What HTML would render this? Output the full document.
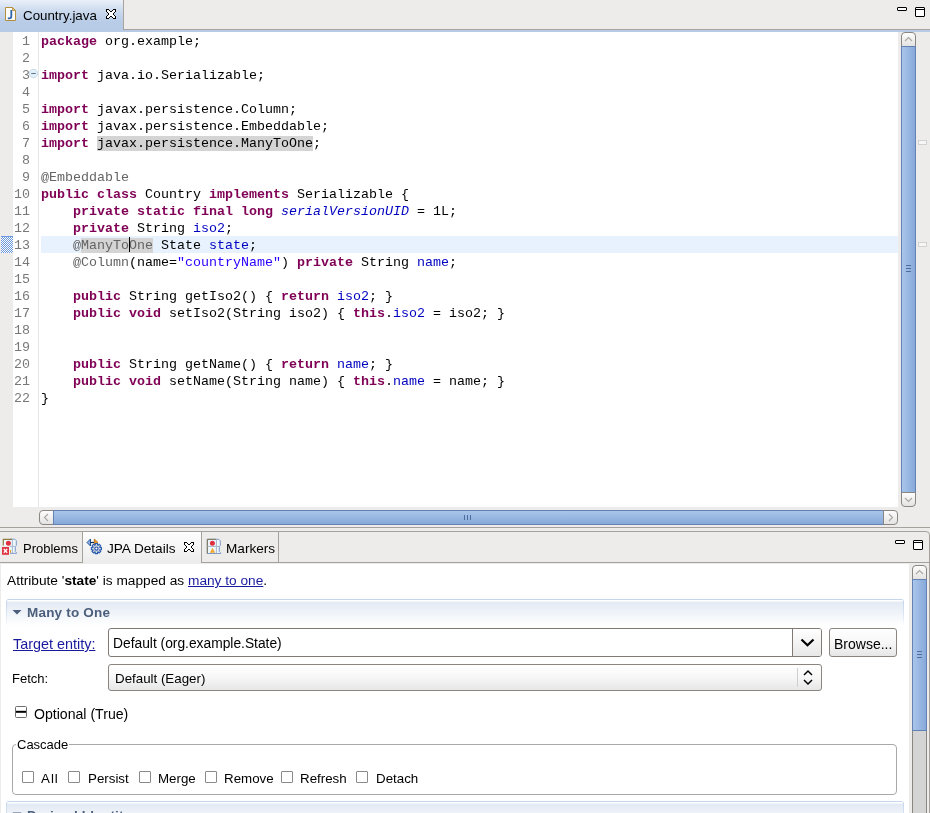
<!DOCTYPE html>
<html><head><meta charset="utf-8">
<style>
*{margin:0;padding:0;box-sizing:border-box}
html,body{width:930px;height:813px;overflow:hidden;background:#edeceb;font-family:"Liberation Sans",sans-serif;font-size:13.33px;color:#000}
.abs{position:absolute}
/* editor */
#tabstrip{left:0;top:0;width:930px;height:30px;background:#edeceb;border-bottom:1px solid #a8a39e}
#tab1{left:0;top:0;width:123px;height:32px;background:linear-gradient(#eaf0f9 0px,#c9d8ed 12px,#b8cce8 22px,#b7cbe7)}
#tab1sep{left:123px;top:0;width:1px;height:30px;background:#a8a39e}
#blueline{left:0;top:30px;width:930px;height:2px;background:#b7cbe7}
#editor{left:13px;top:32px;width:885px;height:475px;background:#fff}
#rulerline{left:38px;top:32px;width:1px;height:475px;background:#e6e6e6}
.code{font-family:"Liberation Mono",monospace;font-size:13.33px;line-height:17px;white-space:pre}
#lnums{left:14px;top:33px;width:16px;text-align:right;color:#787878}
#src{left:41px;top:33px;color:#000}
.k{color:#7f0055;font-weight:bold}
.a{color:#646464}
.f{color:#0000c0}
.fi{color:#0000c0;font-style:italic}
.s{color:#2a00ff}
.hl{background:#d4d4d4}
#curline{left:41px;top:236px;width:857px;height:17px;background:#e8f2fe}

.t{position:absolute;white-space:pre;font-family:"Liberation Sans",sans-serif;font-size:13.33px;line-height:16px}
#vsb{left:898px;top:32px;width:32px;height:475px;background:#edeceb}
.sbtn{position:absolute;border:1px solid #8a8681;background:linear-gradient(#fdfdfd,#e4e3e2)}
.vthumb{position:absolute;border:1px solid #6382b3;background:linear-gradient(90deg,#a9c5ea,#98b7e2 50%,#87a9d9)}
.hthumb{position:absolute;border:1px solid #6382b3;background:linear-gradient(#a9c5ea,#98b7e2 50%,#87a9d9)}
.grip{position:absolute;background:#4f6d9c}
.ovm{position:absolute;width:9px;height:5px;border:1px solid #d2d2d2;background:#f6f6f6}
.line{position:absolute;background:#a5a19c}

.cb{position:absolute;width:12px;height:12px;border:1px solid #8a8a8a;border-radius:1px;background:#fff}
.btn{position:absolute;border:1px solid #8a8580;border-radius:3px;background:linear-gradient(#fff 0%,#f7f7f7 50%,#e6e6e6 100%)}
body>*{will-change:transform}</style></head><body>
<div id="tabstrip" class="abs"></div>
<div id="tab1" class="abs"></div>
<div id="tab1sep" class="abs"></div>
<div id="blueline" class="abs"></div>
<div id="editor" class="abs"></div>
<div id="rulerline" class="abs"></div>
<div id="curline" class="abs"></div>
<div id="lnums" class="abs code">1
2
3
4
5
6
7
8
9
10
11
12
13
14
15
16
17
18
19
20
21
22</div>
<div id="src" class="abs code"><span class="k">package</span> org.example;

<span class="k">import</span> java.io.Serializable;

<span class="k">import</span> javax.persistence.Column;
<span class="k">import</span> javax.persistence.Embeddable;
<span class="k">import</span> <span class="hl">javax.persistence.ManyToOne</span>;

<span class="a">@Embeddable</span>
<span class="k">public</span> <span class="k">class</span> Country <span class="k">implements</span> Serializable {
    <span class="k">private</span> <span class="k">static</span> <span class="k">final</span> <span class="k">long</span> <span class="fi">serialVersionUID</span> = 1L;
    <span class="k">private</span> String <span class="f">iso2</span>;
    <span class="a">@<span class="hl">ManyToOne</span></span> State <span class="f">state</span>;
    <span class="a">@Column</span>(name=<span class="s">"countryName"</span>) <span class="k">private</span> String <span class="f">name</span>;

    <span class="k">public</span> String getIso2() { <span class="k">return</span> <span class="f">iso2</span>; }
    <span class="k">public</span> <span class="k">void</span> setIso2(String iso2) { <span class="k">this</span>.<span class="f">iso2</span> = iso2; }


    <span class="k">public</span> String getName() { <span class="k">return</span> <span class="f">name</span>; }
    <span class="k">public</span> <span class="k">void</span> setName(String name) { <span class="k">this</span>.<span class="f">name</span> = name; }
}</div>

<!-- J icon -->
<svg class="abs" style="left:4px;top:6px" width="14" height="16" viewBox="0 0 14 16">
<path d="M1.5 1.5 H8.5 L11.5 4.5 V14.5 H1.5 Z" fill="#fbfbf8" stroke="#b38c3c" stroke-width="1"/>
<path d="M8.5 1.5 V4.5 H11.5 Z" fill="#e8c878" stroke="#b38c3c" stroke-width="0.8"/>
<path d="M7.3 4 V10.3 Q7.3 12.3 5.3 12.3 H3.8" fill="none" stroke="#2f66ad" stroke-width="1.8"/>
</svg>
<div class="t" style="left:23px;top:8px">Country.java</div>
<svg class="abs" style="left:106px;top:9px" width="10" height="10" shape-rendering="crispEdges"><path d="M1 1h1v1h-1zM2 1h1v1h-1zM7 1h1v1h-1zM8 1h1v1h-1zM1 2h1v1h-1zM2 2h1v1h-1zM3 2h1v1h-1zM6 2h1v1h-1zM7 2h1v1h-1zM8 2h1v1h-1zM2 3h1v1h-1zM3 3h1v1h-1zM4 3h1v1h-1zM5 3h1v1h-1zM6 3h1v1h-1zM7 3h1v1h-1zM3 4h1v1h-1zM4 4h1v1h-1zM5 4h1v1h-1zM6 4h1v1h-1zM3 5h1v1h-1zM4 5h1v1h-1zM5 5h1v1h-1zM6 5h1v1h-1zM2 6h1v1h-1zM3 6h1v1h-1zM4 6h1v1h-1zM5 6h1v1h-1zM6 6h1v1h-1zM7 6h1v1h-1zM1 7h1v1h-1zM2 7h1v1h-1zM3 7h1v1h-1zM6 7h1v1h-1zM7 7h1v1h-1zM8 7h1v1h-1zM1 8h1v1h-1zM2 8h1v1h-1zM7 8h1v1h-1zM8 8h1v1h-1z" fill="#fff"/><path d="M0 0h1v1h-1zM1 0h1v1h-1zM2 0h1v1h-1zM7 0h1v1h-1zM8 0h1v1h-1zM9 0h1v1h-1zM0 1h1v1h-1zM3 1h1v1h-1zM6 1h1v1h-1zM9 1h1v1h-1zM0 2h1v1h-1zM4 2h1v1h-1zM5 2h1v1h-1zM9 2h1v1h-1zM1 3h1v1h-1zM8 3h1v1h-1zM2 4h1v1h-1zM7 4h1v1h-1zM2 5h1v1h-1zM7 5h1v1h-1zM1 6h1v1h-1zM8 6h1v1h-1zM0 7h1v1h-1zM4 7h1v1h-1zM5 7h1v1h-1zM9 7h1v1h-1zM0 8h1v1h-1zM3 8h1v1h-1zM6 8h1v1h-1zM9 8h1v1h-1zM0 9h1v1h-1zM1 9h1v1h-1zM2 9h1v1h-1zM7 9h1v1h-1zM8 9h1v1h-1zM9 9h1v1h-1z" fill="#000"/></svg>
<!-- min/max editor -->
<div class="abs" style="left:897px;top:7px;width:10px;height:4px;border:1px solid #000;border-radius:1px;background:#fff"></div>
<div class="abs" style="left:915px;top:7px;width:10px;height:10px;border:1px solid #000;border-radius:1px;background:#fff;box-shadow:inset 0 -6px 0 #fff, inset 0 -7px 0 #000"></div>
<!-- vertical scrollbar -->
<div id="vsb" class="abs"></div>
<div class="sbtn" style="left:901px;top:32px;width:15px;height:15px;border-radius:4px 4px 0 0"></div>
<svg class="abs" style="left:901px;top:32px" width="15" height="15"><path d="M4 9 L7.5 5.5 L11 9" fill="none" stroke="#aaa6a2" stroke-width="1.1"/></svg>
<div class="vthumb" style="left:901px;top:46px;width:15px;height:447px"></div>
<div class="grip" style="left:906px;top:265px;width:5px;height:1px"></div>
<div class="grip" style="left:906px;top:268px;width:5px;height:1px"></div>
<div class="grip" style="left:906px;top:271px;width:5px;height:1px"></div>
<div class="sbtn" style="left:901px;top:492px;width:15px;height:15px;border-radius:0 0 4px 4px"></div>
<svg class="abs" style="left:901px;top:492px" width="15" height="15"><path d="M4 6 L7.5 9.5 L11 6" fill="none" stroke="#aaa6a2" stroke-width="1.1"/></svg>
<div class="ovm" style="left:918px;top:140px"></div>
<div class="ovm" style="left:918px;top:242px"></div>
<!-- horizontal scrollbar -->
<div class="sbtn" style="left:39px;top:510px;width:15px;height:15px;border-radius:4px 0 0 4px"></div>
<svg class="abs" style="left:39px;top:510px" width="15" height="15"><path d="M9 4 L5.5 7.5 L9 11" fill="none" stroke="#aaa6a2" stroke-width="1.1"/></svg>
<div class="hthumb" style="left:53px;top:510px;width:831px;height:15px"></div>
<div class="grip" style="left:464px;top:515px;width:1px;height:5px"></div>
<div class="grip" style="left:467px;top:515px;width:1px;height:5px"></div>
<div class="grip" style="left:470px;top:515px;width:1px;height:5px"></div>
<div class="sbtn" style="left:883px;top:510px;width:15px;height:15px;border-radius:0 4px 4px 0"></div>
<svg class="abs" style="left:883px;top:510px" width="15" height="15"><path d="M6 4 L9.5 7.5 L6 11" fill="none" stroke="#aaa6a2" stroke-width="1.1"/></svg>
<div class="line" style="left:0;top:527px;width:930px;height:1px"></div>

<!-- bottom panel -->
<div class="abs" style="left:-5px;top:531px;width:935px;height:290px;border:1px solid #a5a19c;border-radius:0 4px 0 0"></div>
<div class="abs" style="left:82px;top:531px;width:120px;height:32px;background:linear-gradient(#fefefe,#ececec);border:1px solid #a5a19c;border-bottom:none"></div>
<div class="abs" style="left:83px;top:563px;width:118px;height:1px;background:#ededed"></div>
<div class="line" style="left:0;top:562px;width:82px;height:1px"></div>
<div class="line" style="left:201px;top:562px;width:728px;height:1px"></div>
<div class="line" style="left:278px;top:532px;width:1px;height:30px"></div>
<div class="abs" style="left:1px;top:564px;width:908px;height:249px;background:#fff"></div>
<div class="abs" style="left:909px;top:564px;width:20px;height:249px;background:#edeceb"></div>
<div class="abs" style="left:912px;top:580px;width:15px;height:233px;background:#d4d4d4;border-left:1px solid #8a8681;border-right:1px solid #8a8681"></div>
<div class="sbtn" style="left:912px;top:565px;width:15px;height:15px;border-radius:4px 4px 0 0"></div>
<svg class="abs" style="left:912px;top:565px" width="15" height="15"><path d="M4 9 L7.5 5.5 L11 9" fill="none" stroke="#aaa6a2" stroke-width="1.1"/></svg>
<div class="vthumb" style="left:912px;top:579px;width:15px;height:152px"></div>
<div class="grip" style="left:917px;top:651px;width:5px;height:1px"></div>
<div class="grip" style="left:917px;top:654px;width:5px;height:1px"></div>
<div class="grip" style="left:917px;top:657px;width:5px;height:1px"></div>
<!-- min/max panel -->
<div class="abs" style="left:895px;top:540px;width:10px;height:4px;border:1px solid #000;border-radius:1px;background:#fff"></div>
<div class="abs" style="left:913px;top:540px;width:10px;height:10px;border:1px solid #000;border-radius:1px;background:#fff;box-shadow:inset 0 -6px 0 #fff, inset 0 -7px 0 #000"></div>
<!-- tabs text -->
<div class="t" style="left:23px;top:541px;font-size:13px">Problems</div>
<div class="t" style="left:107px;top:541px;font-size:13.6px">JPA Details</div>
<div class="t" style="left:226px;top:541px;font-size:13.6px">Markers</div>
<svg class="abs" style="left:184px;top:542px" width="10" height="10" shape-rendering="crispEdges"><path d="M1 1h1v1h-1zM2 1h1v1h-1zM7 1h1v1h-1zM8 1h1v1h-1zM1 2h1v1h-1zM2 2h1v1h-1zM3 2h1v1h-1zM6 2h1v1h-1zM7 2h1v1h-1zM8 2h1v1h-1zM2 3h1v1h-1zM3 3h1v1h-1zM4 3h1v1h-1zM5 3h1v1h-1zM6 3h1v1h-1zM7 3h1v1h-1zM3 4h1v1h-1zM4 4h1v1h-1zM5 4h1v1h-1zM6 4h1v1h-1zM3 5h1v1h-1zM4 5h1v1h-1zM5 5h1v1h-1zM6 5h1v1h-1zM2 6h1v1h-1zM3 6h1v1h-1zM4 6h1v1h-1zM5 6h1v1h-1zM6 6h1v1h-1zM7 6h1v1h-1zM1 7h1v1h-1zM2 7h1v1h-1zM3 7h1v1h-1zM6 7h1v1h-1zM7 7h1v1h-1zM8 7h1v1h-1zM1 8h1v1h-1zM2 8h1v1h-1zM7 8h1v1h-1zM8 8h1v1h-1z" fill="#fff"/><path d="M0 0h1v1h-1zM1 0h1v1h-1zM2 0h1v1h-1zM7 0h1v1h-1zM8 0h1v1h-1zM9 0h1v1h-1zM0 1h1v1h-1zM3 1h1v1h-1zM6 1h1v1h-1zM9 1h1v1h-1zM0 2h1v1h-1zM4 2h1v1h-1zM5 2h1v1h-1zM9 2h1v1h-1zM1 3h1v1h-1zM8 3h1v1h-1zM2 4h1v1h-1zM7 4h1v1h-1zM2 5h1v1h-1zM7 5h1v1h-1zM1 6h1v1h-1zM8 6h1v1h-1zM0 7h1v1h-1zM4 7h1v1h-1zM5 7h1v1h-1zM9 7h1v1h-1zM0 8h1v1h-1zM3 8h1v1h-1zM6 8h1v1h-1zM9 8h1v1h-1zM0 9h1v1h-1zM1 9h1v1h-1zM2 9h1v1h-1zM7 9h1v1h-1zM8 9h1v1h-1zM9 9h1v1h-1z" fill="#000"/></svg>
<!-- content -->
<div class="t" style="left:7px;top:573px;font-size:13.7px">Attribute '<b>state</b>' is mapped as <span style="color:#1a1a9e;text-decoration:underline">many to one</span>.</div>
<div class="abs" style="left:6px;top:599px;width:898px;height:28px;border-top:1px solid #c5d6ec;border-radius:3px 3px 0 0;background:linear-gradient(#ffffff 0,#ffffff 1px,#e3eaf4 2px,#fff 26px)"></div>
<div class="abs" style="left:6px;top:601px;width:1px;height:25px;background:linear-gradient(#c5d6ec,rgba(197,214,236,0))"></div>
<div class="abs" style="left:903px;top:601px;width:1px;height:25px;background:linear-gradient(#c5d6ec,rgba(197,214,236,0))"></div>
<svg class="abs" style="left:12px;top:610px" width="10" height="5"><path d="M0.5 0 H9.5 L5 4.6 Z" fill="#4b5e7b"/></svg>
<div class="t" style="left:27px;top:605px;font-weight:bold;color:#4b5e7b;font-size:13.5px;letter-spacing:0.2px">Many to One</div>
<div class="t" style="left:13px;top:636px;color:#1a1a9e;text-decoration:underline;font-size:14.4px">Target entity:</div>
<div class="abs" style="left:108px;top:628px;width:714px;height:29px;border:1px solid #7f7a75;border-radius:3px;background:#fff"></div>
<div class="abs" style="left:792px;top:629px;width:29px;height:27px;border-left:1px solid #7f7a75;background:linear-gradient(#fff,#e8e8e8);border-radius:0 2px 2px 0"></div>
<svg class="abs" style="left:798px;top:635px" width="18" height="14"><path d="M3.5 4.5 L9.5 10.3 L15.5 4.5" fill="none" stroke="#000" stroke-width="2.2"/></svg>
<div class="t" style="left:113px;top:636px;font-size:13.8px">Default (org.example.State)</div>
<div class="btn" style="left:829px;top:628px;width:68px;height:29px"></div>
<div class="t" style="left:834px;top:636px;font-size:14px">Browse...</div>
<div class="t" style="left:12px;top:671px;font-size:13px">Fetch:</div>
<div class="btn" style="left:108px;top:664px;width:714px;height:27px"></div>
<div class="abs" style="left:797px;top:668px;width:1px;height:19px;background:#d0cfce"></div>
<svg class="abs" style="left:801px;top:668px" width="14" height="20"><path d="M3 7 L7 3 L11 7 M3 12 L7 16 L11 12" fill="none" stroke="#000" stroke-width="1.5"/></svg>
<div class="t" style="left:115px;top:671px">Default (Eager)</div>
<svg class="abs" style="left:15px;top:706px" width="12" height="12"><rect x="0.5" y="0.5" width="11" height="11" rx="1" fill="#fff" stroke="#6e6e6e"/><path d="M1 5.8 H11" stroke="#000" stroke-width="2"/></svg>
<div class="t" style="left:34px;top:706px;font-size:14.1px">Optional (True)</div>
<div class="abs" style="left:12px;top:744px;width:885px;height:51px;border:1px solid #a8a8a8;border-radius:4px"></div>
<div class="t" style="left:16px;top:737px;background:#fff;padding:0 1px;font-size:13px">Cascade</div>
<div class="cb" style="left:22px;top:771px"></div><div class="t" style="left:41px;top:771px;letter-spacing:1px">All</div>
<div class="cb" style="left:68px;top:771px"></div><div class="t" style="left:88px;top:771px">Persist</div>
<div class="cb" style="left:139px;top:771px"></div><div class="t" style="left:158px;top:771px">Merge</div>
<div class="cb" style="left:205px;top:771px"></div><div class="t" style="left:224px;top:771px">Remove</div>
<div class="cb" style="left:281px;top:771px"></div><div class="t" style="left:300px;top:771px">Refresh</div>
<div class="cb" style="left:356px;top:771px"></div><div class="t" style="left:376px;top:771px">Detach</div>
<div class="abs" style="left:6px;top:801px;width:898px;height:28px;border-top:1px solid #c5d6ec;border-radius:3px 3px 0 0;background:linear-gradient(#ffffff 0,#ffffff 1px,#e3eaf4 2px,#fff 26px)"></div>
<div class="abs" style="left:6px;top:803px;width:1px;height:25px;background:linear-gradient(#c5d6ec,rgba(197,214,236,0))"></div>
<div class="abs" style="left:903px;top:803px;width:1px;height:25px;background:linear-gradient(#c5d6ec,rgba(197,214,236,0))"></div>
<svg class="abs" style="left:12px;top:812px" width="10" height="6"><path d="M0.5 0.5 H9.5 L5 5.5 Z" fill="#4b5e7b"/></svg>
<div class="t" style="left:27px;top:808px;font-weight:bold;color:#4b5e7b;font-size:13.5px;letter-spacing:0.2px">Derived Identity</div>

<!-- problems icon -->
<svg class="abs" style="left:0;top:536px" width="20" height="22" viewBox="0 0 20 22">
<path d="M10 3.2 H14.8 L16.3 4.7 V9.5 L15.3 10.5 V15.5 L16.6 16.8 V17.3 H10" fill="#eef8fb" stroke="#7c98c8" stroke-width="1"/>
<path d="M12.4 3.5 V17" stroke="#a8b8d0" stroke-width="1"/>
<path d="M9.8 10.4 H15" stroke="#a8b8d0" stroke-width="1"/>
<path d="M3.3 9.5 V3.3 H12" fill="none" stroke="#8a7d45" stroke-width="1.2"/>
<rect x="4" y="4" width="6" height="6" fill="#f4fbfd"/>
<circle cx="8.4" cy="7.3" r="2.5" fill="#e03040"/>
<path d="M10.5 14 V16.8" stroke="#e09a20" stroke-width="1"/>
<rect x="2" y="11" width="7" height="7.8" fill="#e03545"/>
<path d="M3.8 13 L7.2 16.8 M7.2 13 L3.8 16.8" stroke="#fff" stroke-width="1.3"/>
</svg>
<!-- jpa icon -->
<svg class="abs" style="left:84px;top:536px" width="20" height="22" viewBox="0 0 20 22">
<path d="M3 6.5 L6.5 3 V10 Z" fill="#8eb0e8" stroke="#1d4f8a" stroke-width="1"/>
<path d="M6.5 6.5 H10.3" stroke="#102a55" stroke-width="1.2"/>
<path d="M14 6.5 L10.3 3 V10 Z" fill="#e89a2a" stroke="#b06a10" stroke-width="0.8"/>
<g transform="translate(12.4 12.6)">
<path d="M-1.16 -3.51 L-1.13 -5.07 L1.13 -5.07 L1.16 -3.51 L1.66 -3.31 L2.79 -4.39 L4.39 -2.79 L3.31 -1.66 L3.51 -1.16 L5.07 -1.13 L5.07 1.13 L3.51 1.16 L3.31 1.66 L4.39 2.79 L2.79 4.39 L1.66 3.31 L1.16 3.51 L1.13 5.07 L-1.13 5.07 L-1.16 3.51 L-1.66 3.31 L-2.79 4.39 L-4.39 2.79 L-3.31 1.66 L-3.51 1.16 L-5.07 1.13 L-5.07 -1.13 L-3.51 -1.16 L-3.31 -1.66 L-4.39 -2.79 L-2.79 -4.39 L-1.66 -3.31 Z" fill="#cfd3db" stroke="#2a5ab0" stroke-width="1.1" stroke-linejoin="round"/>
<circle r="1.6" fill="#fff" stroke="#2a5ab0" stroke-width="1.2"/>
</g>
</svg>
<!-- markers icon -->
<svg class="abs" style="left:204px;top:536px" width="20" height="22" viewBox="0 0 20 22">
<path d="M3.3 3.3 H14.8 L16.3 4.8 V9.5 L15.3 10.5 V15.5 L16.6 16.8 V17.5 H3.3 Z" fill="#eef8fb" stroke="#7c98c8" stroke-width="1"/>
<path d="M3.3 17.5 V3.3 H12" fill="none" stroke="#7a7550" stroke-width="1"/>
<path d="M12.4 3.5 V17.3 M3.5 10.4 H15.3" stroke="#a8b4c8" stroke-width="1"/>
<circle cx="8.4" cy="7.3" r="2.5" fill="#e03040"/>
<path d="M8.5 11.8 L11.2 16.8 H5.8 Z" fill="#f0a830"/>
</svg>
<!-- fold icon -->
<svg class="abs" style="left:28px;top:68px" width="11" height="11" viewBox="0 0 11 11">
<circle cx="5.5" cy="5.5" r="4.2" fill="#e4f2fb" stroke="#bcd0e2" stroke-width="0.8"/>
<path d="M3.2 5.5 H7.8" stroke="#66788e" stroke-width="1.1"/>
</svg>
<!-- occurrence marker line 13 -->
<svg class="abs" style="left:1px;top:236px" width="12" height="17" viewBox="0 0 12 17">
<defs><pattern id="chk" width="2" height="2" patternUnits="userSpaceOnUse"><rect width="2" height="2" fill="#ffffff"/><rect width="1" height="1" fill="#6a98dc"/><rect x="1" y="1" width="1" height="1" fill="#6a98dc"/></pattern></defs>
<rect width="12" height="17" fill="url(#chk)"/>
<rect width="12" height="1" fill="#6a98dc"/>
</svg>
<!-- cursor -->
<div class="abs" style="left:129px;top:237px;width:1px;height:15px;background:#000"></div>
</body></html>
